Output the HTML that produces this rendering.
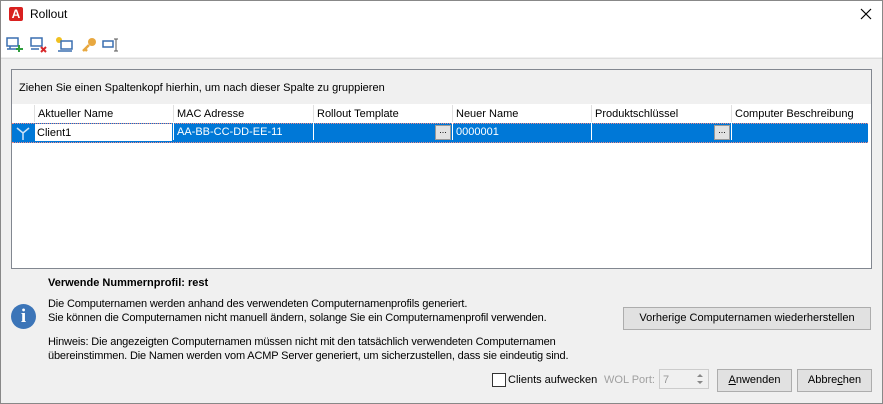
<!DOCTYPE html><html><head><style>
body{margin:0;width:883px;height:404px;overflow:hidden;font-family:"Liberation Sans",sans-serif;font-size:11px;color:#000;background:#f0f0f0;position:relative}
.a{position:absolute}
.win{position:absolute;left:0;top:0;width:881px;height:402px;border:1px solid #888;background:#f0f0f0}
.btn{position:absolute;background:#e1e1e1;border:1px solid #adadad;text-align:center;line-height:21px;font-size:11px}
.hd{position:absolute;top:105px;height:17px;line-height:19px;border-left:1px solid #e0e0e0;padding-left:3px;font-size:11px}
.cell{position:absolute;top:123px;height:17px;line-height:18px;border-left:1px solid #fff;padding-left:3px;color:#fff}
.dots{position:absolute;width:14px;height:13px;background:#e1e1e1;border:1px solid #999;color:#000;font-size:9px;line-height:8px;text-align:center}
.t{letter-spacing:-0.15px}
</style></head><body>
<div class="win"></div>
<div class="a" style="left:1px;top:1px;width:881px;height:30px;background:#fff"></div>
<div class="a" style="left:9px;top:7px;width:14px;height:14px;background:#d9201f;border-radius:2px;color:#fff;font-weight:bold;font-size:12px;line-height:14px;text-align:center">A</div>
<div class="a" style="left:30px;top:7px;font-size:12px">Rollout</div>
<svg class="a" style="left:860px;top:8px" width="12" height="12"><path d="M1 1l10 10M11 1L1 11" stroke="#000" stroke-width="1.2"/></svg>
<div class="a" style="left:1px;top:31px;width:881px;height:26px;background:#fff"></div>
<svg class="a" style="left:6px;top:37px" width="115" height="16">
<rect x="1" y="1" width="11" height="8" fill="none" stroke="#3a6fb0" stroke-width="1.5"/><path d="M1 12h9M4 9v3" stroke="#3a6fb0" stroke-width="1.5"/><path d="M13 8v7M10 12h7" stroke="#2e9e3e" stroke-width="2"/>
<rect x="25" y="1" width="11" height="8" fill="none" stroke="#3a6fb0" stroke-width="1.5"/><path d="M25 12h8" stroke="#3a6fb0" stroke-width="1.5"/><path d="M35 10l5 5M40 10l-5 5" stroke="#d8282a" stroke-width="2"/>
<circle cx="53" cy="3" r="3" fill="#f0c020"/><rect x="55" y="4" width="11" height="8" fill="none" stroke="#3a6fb0" stroke-width="1.5"/><path d="M52 14h14" stroke="#3a6fb0" stroke-width="1.5"/>
<circle cx="86" cy="5" r="4" fill="#e8a840"/><path d="M83 8l-6 6M79 12l2 2" stroke="#e8a840" stroke-width="2.5"/>
<rect x="97" y="4" width="10" height="6" fill="none" stroke="#3a6fb0" stroke-width="1.5"/><path d="M110 2v12M108 2h4M108 14h4" stroke="#555"/>
</svg>
<div class="a" style="left:1px;top:58px;width:881px;height:1px;background:#ddd"></div>
<div class="a" style="left:11px;top:69px;width:859px;height:198px;border:1px solid #828790;background:#fff"></div>
<div class="a" style="left:12px;top:70px;width:859px;height:34px;background:#f0f0f0"></div>
<div class="a" style="left:19px;top:82px">Ziehen Sie einen Spaltenkopf hierhin, um nach dieser Spalte zu gruppieren</div>
<div class="hd" style="left:34px">Aktueller Name</div>
<div class="hd" style="left:173px">MAC Adresse</div>
<div class="hd" style="left:313px">Rollout Template</div>
<div class="hd" style="left:452px">Neuer Name</div>
<div class="hd" style="left:591px">Produktschlüssel</div>
<div class="hd" style="left:731px">Computer Beschreibung</div>
<div class="a" style="left:12px;top:123px;width:856px;height:18px;background:#0078d7;border-top:1px dotted #e88;border-bottom:1px dotted #e88"></div>
<svg class="a" style="left:15px;top:125px" width="16" height="16"><path d="M2 3l6 5 6-5M8 8v7" stroke="#cfe3f7" stroke-width="1.5" fill="none"/></svg>
<div class="a" style="left:35px;top:124px;width:135px;height:17px;background:#fff;line-height:18px;padding-left:2px">Client1</div>
<div class="cell" style="left:173px">AA-BB-CC-DD-EE-11</div>
<div class="cell" style="left:313px"></div>
<div class="dots" style="left:435px;top:125px">...</div>
<div class="cell" style="left:452px">0000001</div>
<div class="cell" style="left:591px"></div>
<div class="dots" style="left:714px;top:125px">...</div>
<div class="cell" style="left:731px"></div>
<div class="a" style="left:48px;top:277px;font-weight:bold">Verwende Nummernprofil: rest</div>
<div class="a" style="left:11px;top:304px;width:25px;height:25px;border-radius:50%;background:#3c75b8;color:#fff;font-weight:bold;font-size:19px;line-height:25px;text-align:center;font-family:'Liberation Serif',serif">i</div>
<div class="a t" style="left:48px;top:297px;line-height:14px">Die Computernamen werden anhand des verwendeten Computernamenprofils generiert.<br>Sie können die Computernamen nicht manuell ändern, solange Sie ein Computernamenprofil verwenden.</div>
<div class="a t" style="left:48px;top:335px;line-height:14px">Hinweis: Die angezeigten Computernamen müssen nicht mit den tatsächlich verwendeten Computernamen<br>übereinstimmen. Die Namen werden vom ACMP Server generiert, um sicherzustellen, dass sie eindeutig sind.</div>
<div class="btn" style="left:623px;top:307px;width:246px;height:21px">Vorherige Computernamen wiederherstellen</div>
<div class="a" style="left:492px;top:373px;width:12px;height:12px;border:1px solid #333;background:#fff"></div>
<div class="a" style="left:508px;top:374px">Clients aufwecken</div>
<div class="a" style="left:604px;top:374px;color:#a0a0a0">WOL Port:</div>
<div class="a" style="left:659px;top:369px;width:50px;height:20px;border:1px solid #ccc;background:#f0f0f0;color:#999;line-height:20px;padding-left:3px;box-sizing:border-box">7</div>
<svg class="a" style="left:694px;top:372px" width="12" height="14"><path d="M3 5l3-3 3 3z M3 9l3 3 3-3z" fill="#888"/></svg>
<div class="btn" style="left:717px;top:369px;width:73px;height:21px"><u>A</u>nwenden</div>
<div class="btn" style="left:797px;top:369px;width:73px;height:21px">Abbre<u>c</u>hen</div>
</body></html>
